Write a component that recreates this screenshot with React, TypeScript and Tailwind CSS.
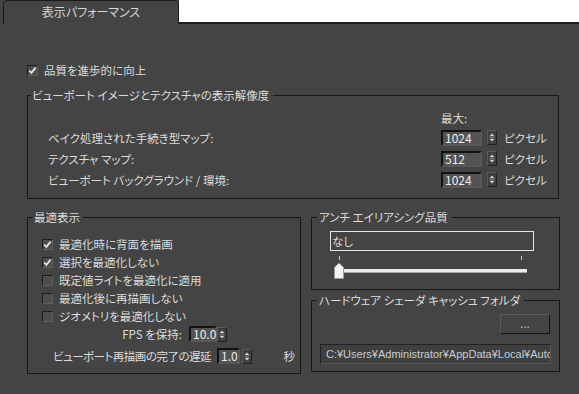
import React from "react";

const Check = ({ checked }: { checked?: boolean }) => (
  <span className="flex h-[11px] w-[11px] shrink-0 items-center justify-center border border-t-[#1c1c1c] border-l-[#1c1c1c] border-b-[#5e5e5e] border-r-[#5e5e5e] bg-[#4e4e4e]">
    {checked && (
      <svg width="9" height="9" viewBox="0 0 9 9">
        <path d="M1.2 4.6 L3.4 6.8 L7.6 1.6" stroke="#e6e6e6" strokeWidth="1.8" fill="none" />
      </svg>
    )}
  </span>
);

const Spin = () => (
  <span className="flex h-[15px] w-[10px] shrink-0 items-center justify-center border border-t-[#5a5a5a] border-l-[#5a5a5a] border-b-[#222] border-r-[#222] bg-[#3e3e3e]">
    <svg width="6" height="11" viewBox="0 0 6 11">
      <path d="M3 1.5 L5.5 4.2 H0.5Z" fill="#d4d4d4" />
      <path d="M0.5 5.5 H5.5" stroke="#6a6a6a" strokeWidth="1" />
      <path d="M3 9.5 L5.5 6.8 H0.5Z" fill="#d4d4d4" />
    </svg>
  </span>
);

const Num = ({ v, w }: { v: string; w: string }) => (
  <span className={"flex h-[16px] shrink-0 items-center border-2 border-t-[#121212] border-l-[#121212] border-r-[#585858] border-b-[#585858] bg-[#535353] pl-[2px] text-[12px] leading-none text-[#eeeeee] " + w}>
    {v}
  </span>
);

const resRows = [
  { label: "ベイク処理された手続き型マップ:", value: "1024" },
  { label: "テクスチャ マップ:", value: "512" },
  { label: "ビューポート バックグラウンド / 環境:", value: "1024" },
];

const adaptive = [
  { label: "最適化時に背面を描画", checked: true },
  { label: "選択を最適化しない", checked: true },
  { label: "既定値ライトを最適化に適用", checked: false },
  { label: "最適化後に再描画しない", checked: false },
  { label: "ジオメトリを最適化しない", checked: false },
];

export default function App() {
  return (
    <div className="h-[394px] w-[579px] overflow-hidden bg-[#444444] font-['Noto_Sans_CJK_JP',sans-serif] text-[11.5px] leading-[16px] text-[#dcdcdc] [font-feature-settings:'palt']">
      {/* tab strip */}
      <div className="flex h-[24px]">
        <div className="w-[3px]" />
        <div className="flex w-[176px] items-center justify-center rounded-t-[5px] border border-b-0 border-[#1a1a1a] bg-[#444444] pb-[1px] text-[12px] text-[#d4d4d4]">
          表示パフォーマンス
        </div>
        <div className="flex-1 border-b-2 border-[#1e1e1e] bg-white" />
      </div>

      <div className="pl-[27px] pt-[39px]">
        <div className="flex h-[14px] items-center gap-[6px]">
          <Check checked />
          <span>品質を進歩的に向上</span>
        </div>

        {/* viewport image & texture resolution */}
        <fieldset className="mt-[10px] w-[532px] border border-[#181818]">
          <legend className="ml-[3px] pl-[1px] pr-[4px]">ビューポート イメージとテクスチャの表示解像度</legend>
          <div className="pb-[8px] pl-[20px] pt-[6px]">
            <div className="flex h-[18px] items-center pl-[393px]">最大:</div>
            {resRows.map((r) => (
              <div key={r.label} className="flex h-[21px] items-center">
                <span className="w-[393px]">{r.label}</span>
                <Num v={r.value} w="w-[41px]" />
                <span className="ml-[5px]">
                  <Spin />
                </span>
                <span className="ml-[7px]">ピクセル</span>
              </div>
            ))}
          </div>
        </fieldset>

        <div className="mt-[10px] flex gap-[10px]">
          {/* adaptive degradation */}
          <fieldset className="w-[274px] border border-[#181818]">
            <legend className="ml-[5px] pl-[1px] pr-[3px]">最適表示</legend>
            <div className="pb-[4px] pt-[10px]">
              {adaptive.map((a) => (
                <div key={a.label} className="flex h-[18px] items-center gap-[6px] pl-[14px]">
                  <Check checked={a.checked} />
                  <span>{a.label}</span>
                </div>
              ))}
              <div className="flex h-[18px] items-center">
                <span className="w-[161px] pr-[7px] text-right">FPS を保持:</span>
                <Num v="10.0" w="w-[28px]" />
                <Spin />
              </div>
              <div className="flex h-[26px] items-center pl-[25px] pr-[5px]">
                <span className="tracking-[-0.5px]">ビューポート再描画の完了の遅延</span>
                <span className="ml-[6px]">
                  <Num v="1.0" w="w-[23px]" />
                </span>
                <span className="ml-[2px]">
                  <Spin />
                </span>
                <span className="ml-auto">秒</span>
              </div>
            </div>
          </fieldset>

          <div className="flex w-[249px] flex-col">
            {/* anti-aliasing */}
            <fieldset className="border border-[#181818]">
              <legend className="ml-[5px] px-[2px] pr-[4px]">アンチ エイリアシング品質</legend>
              <div className="pb-[10px] pl-[18px] pt-[6px]">
                <div className="flex h-[20px] w-[204px] items-center border border-[#e2e2e2] pl-[1px]">なし</div>
                <div className="relative h-[28px] w-[200px]">
                  <span className="absolute left-[9px] top-[5px] h-[4px] w-[1px] bg-[#cfcfcf]" />
                  <span className="absolute left-[191px] top-[5px] h-[4px] w-[1px] bg-[#cfcfcf]" />
                  <span className="absolute left-[13px] top-[18px] h-[4px] w-[184px] border-b border-[#a8a8a8] bg-[#ececec]" />
                  <svg className="absolute left-[4px] top-[12px]" width="10" height="16" viewBox="0 0 10 16">
                    <path d="M0.5 15.5 V4.5 L4 0.8 Q5 0 6 0.8 L9.5 4.5 V15.5 Z" fill="#f2f2f2" stroke="#9a9a9a" strokeWidth="1" />
                  </svg>
                </div>
              </div>
            </fieldset>

            {/* hardware shader cache folder */}
            <fieldset className="mt-[2px] border border-[#181818]">
              <legend className="ml-[5px] px-[2px] pr-[4px]">ハードウェア シェーダ キャッシュ フォルダ</legend>
              <div className="flex flex-col pb-[7px] pt-[6px]">
                <div className="flex justify-end pr-[9px]">
                  <div className="flex h-[20px] w-[50px] items-center justify-center border border-t-[#5a5a5a] border-l-[#5a5a5a] border-b-[#141414] border-r-[#141414] bg-[#444444] pb-[3px] text-[#bdbdbd]">
                    ...
                  </div>
                </div>
                <div className="ml-[8px] mt-[10px] flex h-[20px] w-[231px] items-center overflow-hidden whitespace-nowrap border border-t-[#222] border-l-[#222] border-b-[#555] border-r-[#555] bg-[#3f3f3f] pl-[5px] font-['Liberation_Sans',sans-serif] text-[11px] text-[#c9ccd2]">
                  C:¥Users¥Administrator¥AppData¥Local¥Autodesk
                </div>
              </div>
            </fieldset>
          </div>
        </div>
      </div>
    </div>
  );
}
